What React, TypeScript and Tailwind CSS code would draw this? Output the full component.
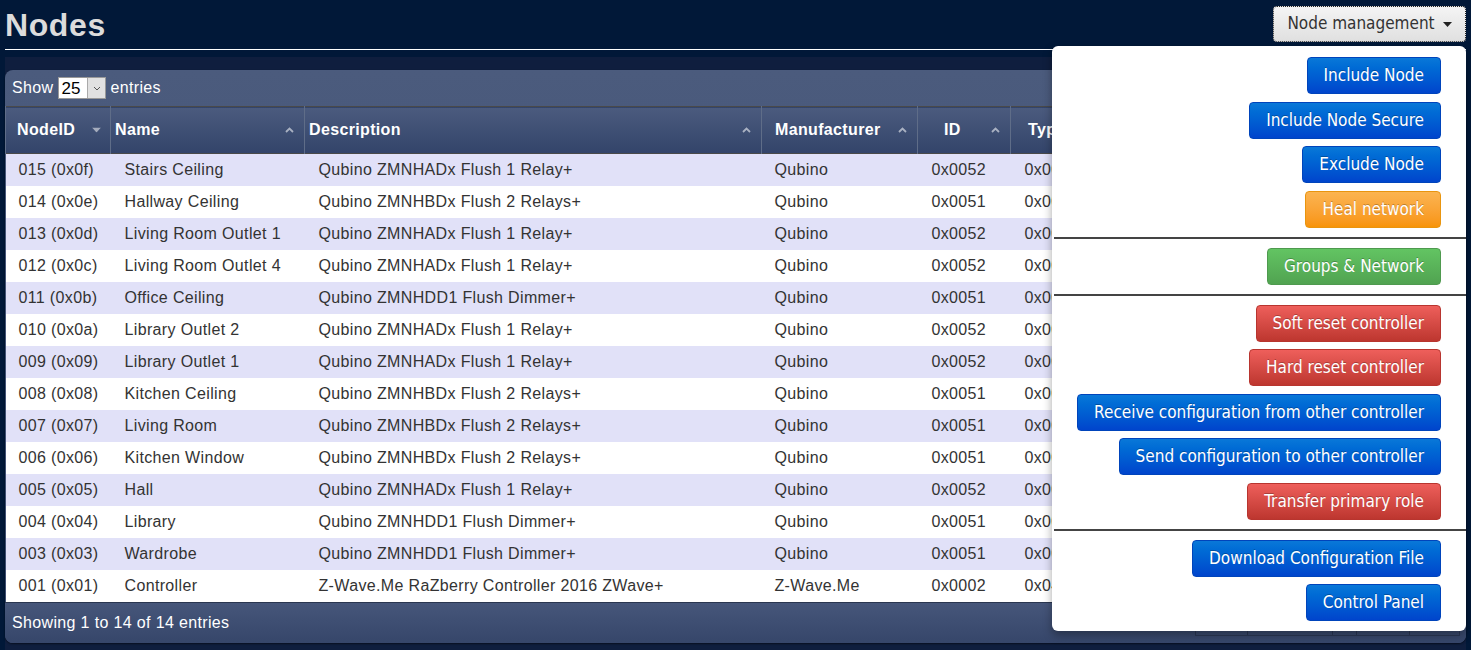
import React from "react";

type Row = { id: string; name: string; desc: string; man: string; pid: string; type: string };

const Q1 = "Qubino ZMNHADx Flush 1 Relay+";
const Q2 = "Qubino ZMNHBDx Flush 2 Relays+";
const QD = "Qubino ZMNHDD1 Flush Dimmer+";

const rows: Row[] = [
  { id: "015 (0x0f)", name: "Stairs Ceiling", desc: Q1, man: "Qubino", pid: "0x0052", type: "0x0002" },
  { id: "014 (0x0e)", name: "Hallway Ceiling", desc: Q2, man: "Qubino", pid: "0x0051", type: "0x0002" },
  { id: "013 (0x0d)", name: "Living Room Outlet 1", desc: Q1, man: "Qubino", pid: "0x0052", type: "0x0002" },
  { id: "012 (0x0c)", name: "Living Room Outlet 4", desc: Q1, man: "Qubino", pid: "0x0052", type: "0x0002" },
  { id: "011 (0x0b)", name: "Office Ceiling", desc: QD, man: "Qubino", pid: "0x0051", type: "0x0001" },
  { id: "010 (0x0a)", name: "Library Outlet 2", desc: Q1, man: "Qubino", pid: "0x0052", type: "0x0002" },
  { id: "009 (0x09)", name: "Library Outlet 1", desc: Q1, man: "Qubino", pid: "0x0052", type: "0x0002" },
  { id: "008 (0x08)", name: "Kitchen Ceiling", desc: Q2, man: "Qubino", pid: "0x0051", type: "0x0002" },
  { id: "007 (0x07)", name: "Living Room", desc: Q2, man: "Qubino", pid: "0x0051", type: "0x0002" },
  { id: "006 (0x06)", name: "Kitchen Window", desc: Q2, man: "Qubino", pid: "0x0051", type: "0x0002" },
  { id: "005 (0x05)", name: "Hall", desc: Q1, man: "Qubino", pid: "0x0052", type: "0x0002" },
  { id: "004 (0x04)", name: "Library", desc: QD, man: "Qubino", pid: "0x0051", type: "0x0001" },
  { id: "003 (0x03)", name: "Wardrobe", desc: QD, man: "Qubino", pid: "0x0051", type: "0x0001" },
  { id: "001 (0x01)", name: "Controller", desc: "Z-Wave.Me RaZberry Controller 2016 ZWave+", man: "Z-Wave.Me", pid: "0x0002", type: "0x0400" },
];

const ChevronUp = () => (
  <svg width="9" height="6" viewBox="0 0 9 6" className="absolute top-1/2 -translate-y-1/2" style={{ right: 10 }}>
    <path d="M1 5 L4.5 1.5 L8 5" fill="none" stroke="#a9b1c2" strokeWidth="1.8" />
  </svg>
);

const TriDown = () => (
  <svg width="9" height="5" viewBox="0 0 9 5" className="absolute top-1/2 -translate-y-1/2" style={{ right: 9 }}>
    <path d="M0 0 L9 0 L4.5 5 Z" fill="#a4acbd" />
  </svg>
);

type BtnColor = "blue" | "orange" | "green" | "red";

const colorCls: Record<BtnColor, string> = {
  blue: "bg-linear-to-b from-[#0a78d8] to-[#0044cc] border-[#0044bb]",
  orange: "bg-linear-to-b from-[#fbb450] to-[#f89406] border-[#e9950f]",
  green: "bg-linear-to-b from-[#62c462] to-[#51a351] border-[#4f9a4f]",
  red: "bg-linear-to-b from-[#ee5f5b] to-[#bd362f] border-[#b8352f]",
};

const condensed = { fontFamily: '"DejaVu Sans Condensed", "DejaVu Sans", sans-serif' };

const MenuBtn = ({ label, color, first }: { label: string; color: BtnColor; first?: boolean }) => (
  <div className={`flex justify-end ${first ? "" : "mt-[7.5px]"}`}>
    <button
      className={`h-[37px] px-[16px] rounded-[4px] border text-white text-[17px] leading-none whitespace-nowrap [text-shadow:0_-1px_0_rgba(0,0,0,0.25)] ${colorCls[color]}`}
      style={condensed}
    >
      {label}
    </button>
  </div>
);

const Sep = () => <div className="mt-[9px] mb-[9px] ml-[2px] h-[2px] bg-[#444]" />;

export default function App() {
  return (
    <div
      className="relative min-h-[650px] bg-[#011838] px-[5px] overflow-hidden tracking-[0.35px]"
      style={{ fontFamily: '"Liberation Sans", Arial, sans-serif' }}
    >
      {/* Title bar */}
      <div className="flex justify-between items-start h-[50px] border-b border-white">
        <h1 className="pt-[9px] text-[32px] leading-[32px] font-bold text-[#dcdcdc] tracking-[0.6px]">Nodes</h1>
        <button
          className="mt-[6px] h-[36px] w-[193px] flex items-center justify-center gap-[8px] rounded-[4px] border border-dotted border-[#222] bg-linear-to-b from-[#f4f4f4] to-[#e0e0e0] text-[#333] text-[17px] tracking-normal"
          style={condensed}
        >
          <span>Node management</span>
          <svg width="9" height="5" viewBox="0 0 9 5">
            <path d="M0 0 L9 0 L4.5 5 Z" fill="#222" />
          </svg>
        </button>
      </div>

      {/* Table container band */}
      <div className="mt-[7px] bg-[#0f1e3e] pt-[13px] pb-[8px]">
        <div className="rounded-[8px] overflow-hidden bg-linear-to-b from-[#4b5b7d] to-[#3d4d70] shadow-[0_1px_2px_rgba(0,0,0,0.5)]">
          {/* Show entries */}
          <div className="h-[36px] flex items-center pl-[7px] text-white text-[16px]">
            <span>Show</span>
            <div className="ml-[5px] flex h-[22px] border border-[#999] bg-white">
              <span className="w-[28px] text-black text-[17px] leading-[22px] pl-[2px] tracking-normal">25</span>
              <span className="w-[18px] bg-[#e1e1e1] border-l border-[#aaa] flex items-center justify-center">
                <svg width="8" height="5" viewBox="0 0 8 5">
                  <path d="M1 1 L4 4 L7 1" fill="none" stroke="#555" strokeWidth="1" />
                </svg>
              </span>
            </div>
            <span className="ml-[4px]">entries</span>
          </div>

          <table className="table-fixed w-[1461px] border-collapse text-[16px]">
            <colgroup>
              <col className="w-[105px]" />
              <col className="w-[194px]" />
              <col className="w-[457px]" />
              <col className="w-[156px]" />
              <col className="w-[93px]" />
              <col className="w-[156px]" />
              <col className="w-[150px]" />
              <col className="w-[150px]" />
            </colgroup>
            <thead>
              <tr className="h-[47px] bg-linear-to-b from-[#4b5b7e] to-[#33446a] text-white font-bold text-left border-t border-[#2c3a58] border-b border-[#4a4a4a]">
                <th className="relative pl-[11px] border-l border-[#5f6d88] font-bold">NodeID<TriDown /></th>
                <th className="relative pl-[4px] border-l border-[#5f6d88] font-bold">Name<ChevronUp /></th>
                <th className="relative pl-[4px] border-l border-[#5f6d88] font-bold">Description<ChevronUp /></th>
                <th className="relative pl-[13px] border-l border-[#5f6d88] font-bold">Manufacturer<ChevronUp /></th>
                <th className="relative pl-[26px] border-l border-[#5f6d88] font-bold">ID<ChevronUp /></th>
                <th className="relative pl-[17px] border-l border-[#5f6d88] font-bold">Type<ChevronUp /></th>
                <th className="relative border-l border-[#5f6d88] font-bold"><ChevronUp /></th>
                <th className="relative border-l border-[#5f6d88] border-r font-bold"><ChevronUp /></th>
              </tr>
            </thead>
            <tbody>
              {rows.map((r, i) => (
                <tr key={r.id} className={`h-[32px] text-[#333] ${i % 2 === 0 ? "bg-[#e1e1f8]" : "bg-white"}`}>
                  <td className="pl-[13px] whitespace-nowrap">{r.id}</td>
                  <td className="pl-[14px] whitespace-nowrap">{r.name}</td>
                  <td className="pl-[14px] whitespace-nowrap">{r.desc}</td>
                  <td className="pl-[13px] whitespace-nowrap">{r.man}</td>
                  <td className="pl-[14px] whitespace-nowrap">{r.pid}</td>
                  <td className="pl-[14px] whitespace-nowrap">{r.type}</td>
                  <td />
                  <td />
                </tr>
              ))}
            </tbody>
          </table>

          {/* Footer */}
          <div className="h-[41px] flex items-center justify-between pl-[7px] pr-[6px] text-white text-[16px] border-t border-[#2a3650] bg-linear-to-b from-[#46567a] to-[#36466a]">
            <span>Showing 1 to 14 of 14 entries</span>
            <div className="flex self-end mb-[7px] h-[28px] border border-[#2b3855]">
              <span className="w-[52px] border-r border-[#2b3855]" />
              <span className="w-[85px] border-r border-[#2b3855]" />
              <span className="w-[24px] border-r border-[#2b3855]" />
              <span className="w-[53px] border-r border-[#2b3855]" />
              <span className="w-[49px]" />
            </div>
          </div>
        </div>
      </div>

      {/* Dropdown menu */}
      <div className="absolute left-[1052px] top-[46px] w-[414px] bg-white rounded-[6px] shadow-[0_4px_10px_rgba(0,0,0,0.35)] pt-[11px] pb-[10px] pr-[25px] tracking-normal">
        <MenuBtn label="Include Node" color="blue" first />
        <MenuBtn label="Include Node Secure" color="blue" />
        <MenuBtn label="Exclude Node" color="blue" />
        <MenuBtn label="Heal network" color="orange" />
        <div className="-mr-[25px]"><Sep /></div>
        <MenuBtn label="Groups & Network" color="green" first />
        <div className="-mr-[25px]"><Sep /></div>
        <MenuBtn label="Soft reset controller" color="red" first />
        <MenuBtn label="Hard reset controller" color="red" />
        <MenuBtn label="Receive configuration from other controller" color="blue" />
        <MenuBtn label="Send configuration to other controller" color="blue" />
        <MenuBtn label="Transfer primary role" color="red" />
        <div className="-mr-[25px]"><Sep /></div>
        <MenuBtn label="Download Configuration File" color="blue" first />
        <MenuBtn label="Control Panel" color="blue" />
      </div>
    </div>
  );
}
